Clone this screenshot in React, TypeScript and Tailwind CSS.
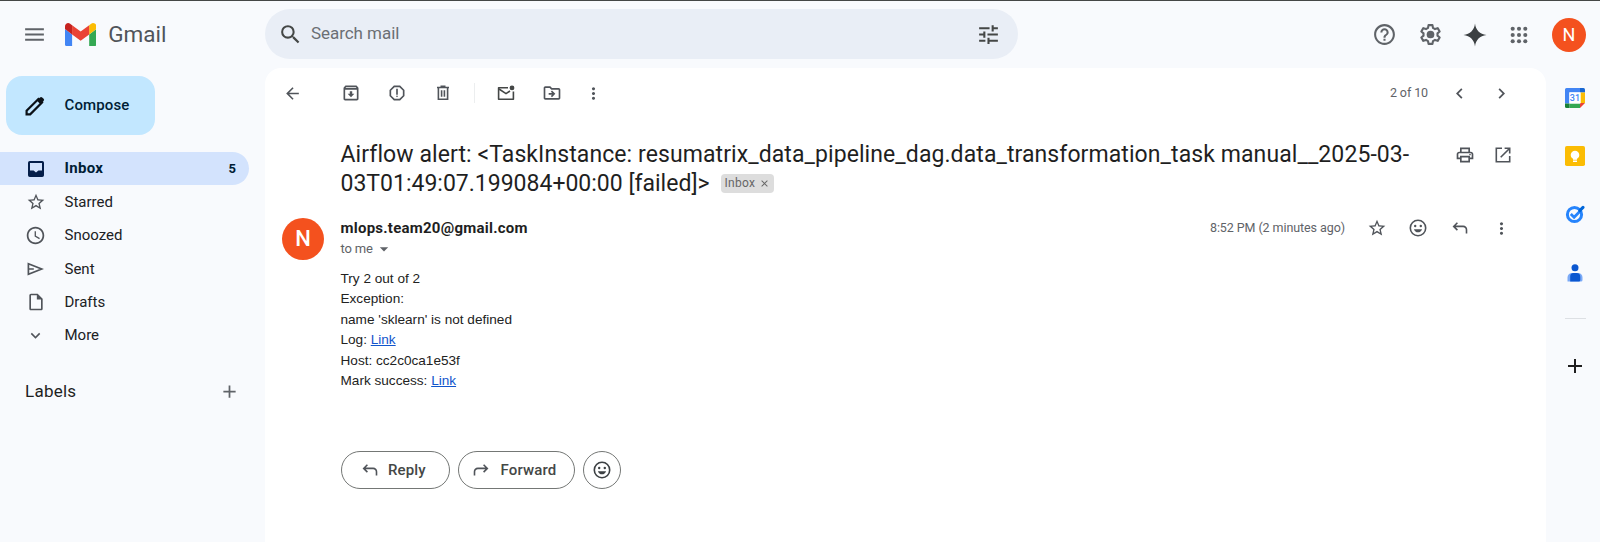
import type { ReactNode } from "react";
import {
  MdAdd,
  MdAccessTime,
  MdArrowBack,
  MdArrowDropDown,
  MdChevronLeft,
  MdChevronRight,
  MdClose,
  MdExpandMore,
  MdHelpOutline,
  MdMenu,
  MdMoreVert,
  MdOutlineArchive,
  MdOutlineDriveFileMove,
  MdOutlineInsertDriveFile,
  MdOutlinePrint,
  MdOutlineReport,
  MdSearch,
  MdStarBorder,
  MdTune,
} from "react-icons/md";

function GmailLogo() {
  return (
    <svg viewBox="52 42 88 66" className="h-[23.5px] w-[31.3px]">
      <path fill="#4285f4" d="M58 108h14V74L52 59v43c0 3.32 2.69 6 6 6" />
      <path fill="#34a853" d="M120 108h14c3.32 0 6-2.69 6-6V59l-20 15" />
      <path fill="#fbbc04" d="M120 48v26l20-15v-8c0-7.42-8.47-11.65-14.4-7.2" />
      <path fill="#ea4335" d="M72 74V48l24 18 24-18v26L96 92" />
      <path fill="#c5221f" d="M52 51v8l20 15V48l-5.6-4.2c-5.94-4.45-14.4-.22-14.4 7.2" />
    </svg>
  );
}

function Pencil() {
  return (
    <svg viewBox="0 0 20 20" className="h-5 w-5" fill="none" stroke="#0b1117" strokeWidth="2.2">
      <path d="M1.600 18.400v-3.600L13.400 3l3.600 3.600L5.200 18.400z" />
      <path d="M11.800 4.600 15 1.400a1.600 1.600 0 0 1 2.200 0l1.400 1.400a1.600 1.600 0 0 1 0 2.200L15.400 8.200z" fill="#0b1117" stroke="none" />
    </svg>
  );
}

function Sparkle() {
  return (
    <svg viewBox="0 0 24 24" className="h-6 w-6" fill="#3c4043">
      <path d="M12 .5C12.800 7.200 16.800 11.200 23.500 12 16.800 12.800 12.800 16.800 12 23.500 11.200 16.800 7.200 12.800.5 12 7.200 11.200 11.200 7.200 12 .5z" />
    </svg>
  );
}

function Gear() {
  return (
    <svg viewBox="0 0 24 24" className="h-[25px] w-[25px]" fill="none" stroke="#5f6368" strokeWidth="2">
      <path
        strokeLinejoin="round"
        d="M10.100 3h3.800l.5 2.700 1.900 1.100 2.600-.9 1.900 3.200-2.100 1.800v2.200l2.100 1.800-1.900 3.200-2.600-.9-1.900 1.100-.5 2.700h-3.800l-.5-2.700-1.900-1.100-2.600.9-1.900-3.200 2.100-1.800v-2.200L3.200 9.100l1.900-3.200 2.600.9 1.900-1.100z"
      />
      <circle cx="12" cy="12" r="3.700" fill="#5f6368" stroke="none" />
    </svg>
  );
}

function AppsGrid() {
  return (
    <svg viewBox="0 0 18 18" className="h-[18px] w-[18px]" fill="#5f6368">
      {[2.7, 9, 15.3].map((y) => [2.7, 9, 15.3].map((x) => <circle key={`${x}-${y}`} cx={x} cy={y} r="2.050" />))}
    </svg>
  );
}

function InboxTray() {
  return (
    <svg viewBox="0 0 16 16" className="h-4 w-4">
      <path
        fillRule="evenodd"
        fill="#041e49"
        d="M1.800 0h12.400A1.800 1.800 0 0 1 16 1.800v12.400a1.800 1.800 0 0 1-1.800 1.800H1.800A1.800 1.800 0 0 1 0 14.200V1.800A1.800 1.800 0 0 1 1.800 0zM2 2v7.400h3.600L8 11.600l2.400-2.200H14V2z"
      />
    </svg>
  );
}

function Trash() {
  return (
    <svg viewBox="0 0 16 16" className="h-4 w-4" fill="none" stroke="#50545a" strokeWidth="1.600">
      <path d="M2 2.500h12M5.500 1.400h5M3.400 3v11.300h9.200V3M6.600 5.200v6.600M9.400 5.200v6.600" />
    </svg>
  );
}

function MarkUnread() {
  return (
    <svg viewBox="0 0 18 16" className="h-4 w-[18px]" fill="none" stroke="#444746" strokeWidth="1.600">
      <path d="M11 2.800H1.600v11.400h14.800V6.400" strokeLinejoin="round" />
      <path d="m2 4 7 4.600 4-2.600" />
      <circle cx="15" cy="2.900" r="2.400" fill="#444746" stroke="none" />
    </svg>
  );
}

function Arrow({ flip = false, color = "#50545a" }: { flip?: boolean; color?: string }) {
  return (
    <svg
      viewBox="0 0 16 12"
      className={flip ? "h-3 w-4 -scale-x-100" : "h-3 w-4"}
      fill="none"
      stroke={color}
      strokeWidth="1.600"
    >
      <path d="M5.400.7 1.700 4.400l3.700 3.700M1.900 4.400h9.300a3.300 3.300 0 0 1 3.300 3.300v3.800" />
    </svg>
  );
}

function Smile({ color = "#50545a" }: { color?: string }) {
  return (
    <svg viewBox="0 0 18 18" className="h-[18px] w-[18px]" fill={color}>
      <circle cx="9" cy="9" r="7.700" fill="none" stroke={color} strokeWidth="1.600" />
      <circle cx="6.200" cy="7" r="1.200" />
      <circle cx="11.800" cy="7" r="1.200" />
      <path d="M4.900 10.200h8.200c-.6 1.900-2.200 3.100-4.100 3.100s-3.500-1.200-4.100-3.100z" />
    </svg>
  );
}

function OpenNew() {
  return (
    <svg viewBox="0 0 16 16" className="h-4 w-4" fill="none" stroke="#50545a" strokeWidth="1.600">
      <path d="M7 1.300H1.300v13.400h13.400V9M9.600 1.300h5.100v5.100M14.500 1.500 5.700 10.300" />
    </svg>
  );
}

function Send() {
  return (
    <svg viewBox="0 0 17 14" className="h-[14px] w-[17px]" fill="none" stroke="#50545a" strokeWidth="1.700">
      <path d="M1.400 1.700 14.700 7 1.400 12.300zM1.500 7h5.300" />
    </svg>
  );
}

function Calendar() {
  return (
    <svg viewBox="0 0 20 20" className="h-5 w-5">
      <path d="M1.500 0H15v4.500H4.500V15.500H0V1.500A1.500 1.500 0 0 1 1.500 0z" fill="#4285f4" />
      <path d="M15 0h3.500A1.500 1.500 0 0 1 20 1.500v3h-5z" fill="#1967d2" />
      <path d="M15.500 4.500H20V15h-4.500z" fill="#fbbc04" />
      <path d="M4.500 15.500H15V20H4.500z" fill="#34a853" />
      <path d="M0 15.500h4.500V20h-3A1.500 1.500 0 0 1 0 18.500z" fill="#188038" />
      <path d="M15 15h5l-5 5z" fill="#ea4335" />
      <path d="M4.300 4.300h11.200v11.200H4.300z" fill="#fff" />
      <text x="9.900" y="13.300" textAnchor="middle" fontSize="9" fontWeight="500" fontFamily="Roboto, sans-serif" fill="#4285f4">
        31
      </text>
    </svg>
  );
}

function Keep() {
  return (
    <svg viewBox="0 0 20 20" className="h-5 w-5">
      <rect width="20" height="20" rx="1.800" fill="#fbbc04" />
      <circle cx="10" cy="9" r="4.300" fill="#fff" />
      <path d="M8 11h4v2.700H8zM8 14.500h4v1.600H8z" fill="#fff" />
    </svg>
  );
}

function Tasks() {
  return (
    <svg viewBox="0 0 20 20" className="h-5 w-5" fill="none">
      <circle cx="9.500" cy="10.500" r="7.100" stroke="#2684fc" strokeWidth="3" />
      <path d="m5.800 10 3.300 3.200L16 6.300" stroke="#2684fc" strokeWidth="2.800" />
      <path d="m14.800 6.600 3.200-3.200" stroke="#0066da" strokeWidth="3" strokeLinecap="round" />
    </svg>
  );
}

function Contacts() {
  return (
    <svg viewBox="0 0 16 18" className="h-[18px] w-4">
      <circle cx="8" cy="3.800" r="3.500" fill="#0b57d0" />
      <path d="M5 9h6a4.300 4.300 0 0 1 4.500 4.500V16a1.500 1.500 0 0 1-1.500 1.500H.5V13.500A4.500 4.500 0 0 1 5 9z" fill="#7baaf7" />
      <path d="M6.500 9h3a4 4 0 0 1 3.800 4v3a1.500 1.500 0 0 1-1.500 1.500H3.200V12.500A3.400 3.400 0 0 1 6.500 9z" fill="#0b57d0" />
    </svg>
  );
}

function NavRow({ icon, label }: { icon: ReactNode; label: string }) {
  return (
    <div className="flex h-[33.4px] items-center">
      <span className="ml-[23.5px] flex w-6 justify-center text-[#50545a]">{icon}</span>
      <span className="ml-[17px] text-[15px] text-[#202124]">{label}</span>
    </div>
  );
}

function Slot({ children, wide }: { children: ReactNode; wide?: boolean }) {
  return (
    <span className={wide ? "flex w-[46px] shrink-0 justify-center" : "flex w-[41.5px] shrink-0 justify-center"}>
      {children}
    </span>
  );
}

function Header() {
  return (
    <header className="flex h-[67px] shrink-0 items-center">
      <div className="flex w-[265px] shrink-0 items-center pl-[22px]">
        <MdMenu size={25} color="#5f6368" />
        <div className="ml-[18px]">
          <GmailLogo />
        </div>
        <span className="ml-3 text-[22.5px] leading-none text-[#50545a]">Gmail</span>
      </div>
      <div className="mb-px flex h-[50px] w-[753px] shrink-0 items-center rounded-full bg-[#e9eef6] pl-[13px] pr-[17px]">
        <MdSearch size={25} color="#444746" />
        <span className="ml-[8px] flex-1 text-[17px] tracking-[-0.05px] text-[#6b6f74]">Search mail</span>
        <MdTune size={25} color="#444746" />
      </div>
      <div className="ml-auto flex items-center pr-[14px]">
        <Slot wide><MdHelpOutline size={25} color="#5f6368" /></Slot>
        <Slot wide><Gear /></Slot>
        <span className="flex w-[42px] justify-center"><Sparkle /></span>
        <span className="flex w-[46px] justify-center"><AppsGrid /></span>
        <span className="ml-[10.5px] flex h-[34px] w-[34px] items-center justify-center rounded-full bg-[#f4511e] text-[18px] text-white">
          N
        </span>
      </div>
    </header>
  );
}

function Sidebar() {
  return (
    <aside className="flex w-[265px] shrink-0 flex-col pt-2">
      <div className="ml-1.5 flex h-[59px] w-[149px] items-center rounded-[16px] bg-[#c2e7ff]">
        <span className="ml-[19px]"><Pencil /></span>
        <span className="ml-[19.5px] text-[15px] font-medium tracking-[0.12px] text-[#001d35]">Compose</span>
      </div>
      <nav className="mt-[17px] flex flex-col">
        <div className="flex h-[33.4px] w-[248.5px] items-center rounded-r-full bg-[#d3e3fd] text-[#001d35]">
          <span className="ml-[23.5px] flex w-6 justify-center"><InboxTray /></span>
          <span className="ml-[17px] flex-1 text-[15px] font-bold tracking-[0.3px]">Inbox</span>
          <span className="pr-[12.5px] text-[13px] font-bold">5</span>
        </div>
        <NavRow icon={<MdStarBorder size={20} />} label="Starred" />
        <NavRow icon={<MdAccessTime size={21} />} label="Snoozed" />
        <NavRow icon={<Send />} label="Sent" />
        <NavRow icon={<MdOutlineInsertDriveFile size={20} />} label="Drafts" />
        <NavRow icon={<MdExpandMore size={19} />} label="More" />
      </nav>
      <div className="mt-[26px] flex h-[26px] items-center pl-[25px] pr-[25px]">
        <span className="flex-1 text-[17px] tracking-[0.25px] text-[#1f1f1f]">Labels</span>
        <MdAdd size={21} color="#5f6368" />
      </div>
    </aside>
  );
}

function Toolbar() {
  const c = "#50545a";
  return (
    <div className="flex h-[50px] shrink-0 items-center">
      <span className="ml-[7px] flex w-[41px] justify-center"><MdArrowBack size={19} color={c} /></span>
      <span className="w-[15px]" />
      <Slot wide><MdOutlineArchive size={20} color={c} /></Slot>
      <Slot wide><MdOutlineReport size={20} color={c} /></Slot>
      <Slot wide><Trash /></Slot>
      <span className="ml-[7.5px] h-5 w-px bg-[#eceeef]" />
      <span className="ml-[8.5px] flex w-[46px] justify-center"><MarkUnread /></span>
      <Slot wide><MdOutlineDriveFileMove size={20} color={c} /></Slot>
      <span className="flex w-[36.5px] justify-center"><MdMoreVert size={19} color={c} /></span>
      <span className="ml-auto mr-[11px] text-[12.5px] tracking-[-0.1px] text-[#5f6368]">2 of 10</span>
      <Slot><MdChevronLeft size={21} color={c} /></Slot>
      <Slot><MdChevronRight size={21} color={c} /></Slot>
      <span className="w-[23.5px]" />
    </div>
  );
}

function MailLink() {
  return <a className="text-[#1155cc] underline">Link</a>;
}

function Message() {
  const c = "#50545a";
  return (
    <main className="flex w-[1280.5px] shrink-0 flex-col rounded-t-[16px] bg-white">
      <Toolbar />
      <div className="mt-[22px] flex pl-[75.5px]">
        <h1 className="w-[1095px] shrink-0 text-[23px] leading-[29px] text-[#1f1f1f]">
          <span className="block whitespace-nowrap tracking-[0.085px]">
            Airflow alert: &lt;TaskInstance: resumatrix_data_pipeline_dag.data_transformation_task manual__2025-03-
          </span>
          <span className="flex items-center whitespace-nowrap">
            03T01:49:07.199084+00:00 [failed]&gt;
            <span className="ml-[11px] flex h-[19px] w-[53px] items-center rounded-[4px] bg-[#dddddd] pl-[4px] text-[12px] tracking-[0.3px] text-[#666666]">
              Inbox
              <MdClose className="ml-[4px]" size={11} />
            </span>
          </span>
        </h1>
        <div className="flex h-[30px] items-center pl-[10.5px]">
          <span className="flex w-[38px] justify-center"><MdOutlinePrint size={20} color={c} /></span>
          <span className="flex w-[38px] justify-center"><OpenNew /></span>
        </div>
      </div>
      <div className="mt-[18px] flex pl-[17px]">
        <span className="mt-[1.5px] flex h-[42px] w-[42px] shrink-0 items-center justify-center rounded-full bg-[#f4511e] text-[22px] font-medium text-white">
          N
        </span>
        <div className="ml-[16.5px] flex flex-1 flex-col">
          <div className="flex h-[24px] items-center">
            <span className="flex-1 text-[15px] font-bold tracking-[0.24px] text-[#1f1f1f]">mlops.team20@gmail.com</span>
            <span className="mr-[11px] text-[12.5px] tracking-[-0.08px] text-[#5f6368]">8:52 PM (2 minutes ago)</span>
            <Slot><MdStarBorder size={20} color={c} /></Slot>
            <Slot><Smile /></Slot>
            <Slot><Arrow /></Slot>
            <Slot><MdMoreVert size={19} color={c} /></Slot>
            <span className="w-[23.5px]" />
          </div>
          <div className="flex h-[18px] items-center text-[13px] tracking-[-0.15px] text-[#5f6368]">
            to me
            <MdArrowDropDown size={20} className="ml-px" />
          </div>
          <div className="mt-[10.5px] font-['Liberation_Sans',Arial,sans-serif] text-[13.6px] leading-[20.5px] text-[#222222]">
            <p>Try 2 out of 2</p>
            <p>Exception:</p>
            <p>name &#39;sklearn&#39; is not defined</p>
            <p>Log: <MailLink /></p>
            <p>Host: cc2c0ca1e53f</p>
            <p>Mark success: <MailLink /></p>
          </div>
          <div className="mt-[59.500px] flex gap-2 text-[15px] font-medium text-[#444746]">
            <button className="flex h-[38px] w-[109px] items-center rounded-full border border-[#747775] pl-[20px]">
              <Arrow />
              <span className="ml-[10.5px] tracking-[0.15px]">Reply</span>
            </button>
            <button className="flex h-[38px] w-[117px] items-center rounded-full border border-[#747775] pl-[14px]">
              <Arrow flip />
              <span className="ml-[12px] tracking-[0.15px]">Forward</span>
            </button>
            <button className="flex h-[38px] w-[38px] items-center justify-center rounded-full border border-[#747775]">
              <Smile color="#3c4043" />
            </button>
          </div>
        </div>
      </div>
    </main>
  );
}

function SidePanel() {
  return (
    <aside className="flex flex-1 flex-col items-center pl-[5px] pt-[10px]">
      <div className="flex h-[39px] items-center"><Calendar /></div>
      <div className="mt-[19px] flex h-[39px] items-center"><Keep /></div>
      <div className="mt-[19px] flex h-[39px] items-center"><Tasks /></div>
      <div className="mt-[20px] flex h-[39px] items-center"><Contacts /></div>
      <div className="mt-[26px] h-px w-[21px] bg-[#dde0e4]" />
      <MdAdd className="mt-[35px]" size={24} color="#1f1f1f" />
    </aside>
  );
}

export default function App() {
  return (
    <div className="flex h-[542px] w-[1600px] flex-col overflow-hidden border-t border-[#444746] bg-[#f8fafd] font-[Roboto,sans-serif]">
      <Header />
      <div className="flex min-h-0 flex-1">
        <Sidebar />
        <Message />
        <SidePanel />
      </div>
    </div>
  );
}
